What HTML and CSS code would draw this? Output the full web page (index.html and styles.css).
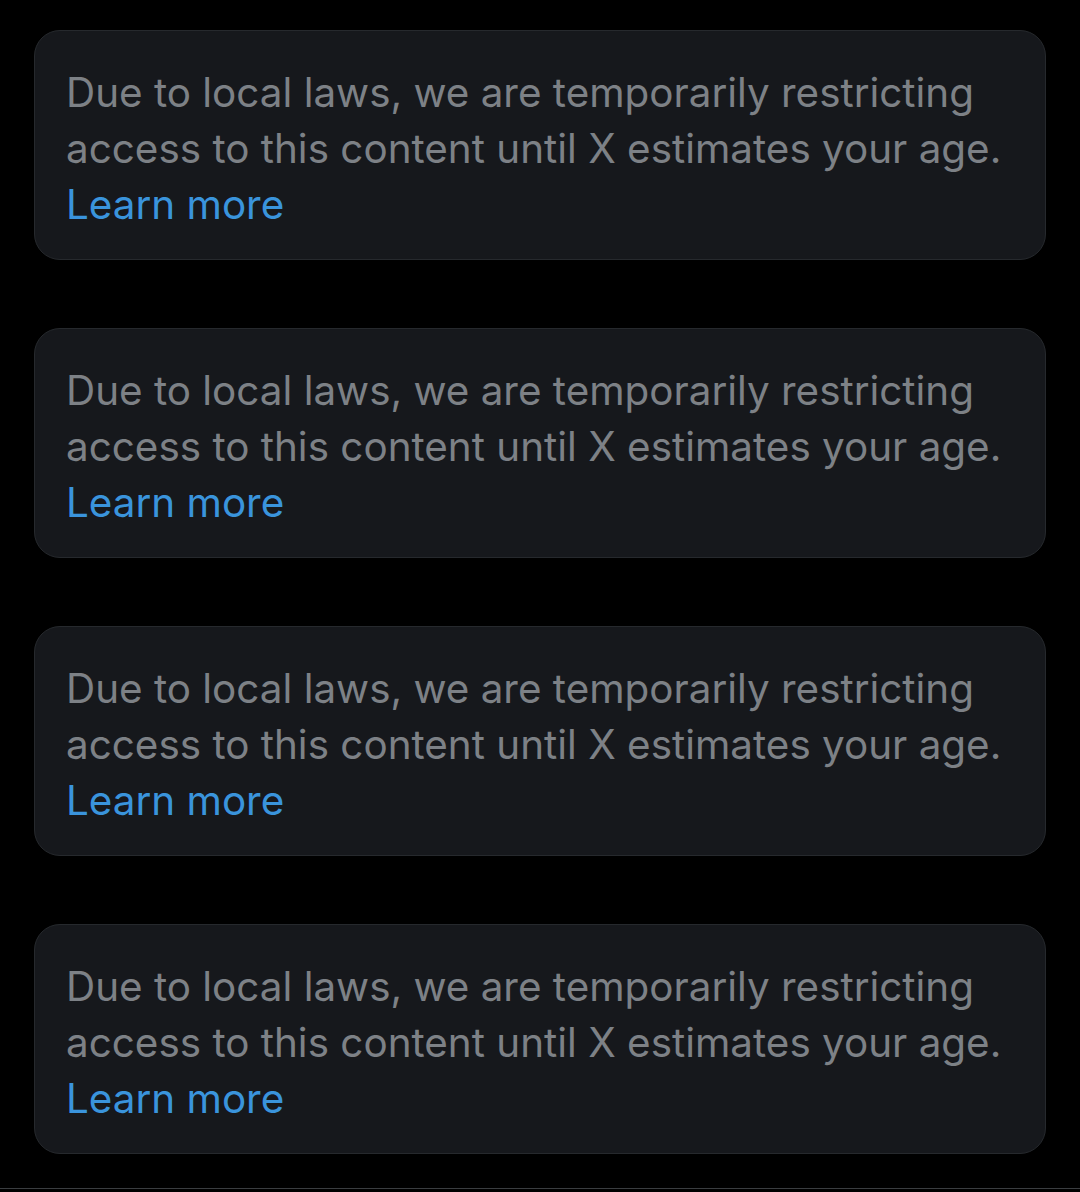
FILE: index.html
```html
<!DOCTYPE html>
<html lang="en">
<head>
<meta charset="utf-8">
<link rel="stylesheet" href="styles.css">
<title>Restricted content</title>
</head>
<body>
<main class="feed">
  <div class="notice">
    <p class="notice-text"><span class="line">Due to local laws, we are temporarily restricting</span> <span class="line">access to this content until X estimates your age.</span> <a class="notice-link" href="#">Learn more</a></p>
  </div>
  <div class="notice">
    <p class="notice-text"><span class="line">Due to local laws, we are temporarily restricting</span> <span class="line">access to this content until X estimates your age.</span> <a class="notice-link" href="#">Learn more</a></p>
  </div>
  <div class="notice">
    <p class="notice-text"><span class="line">Due to local laws, we are temporarily restricting</span> <span class="line">access to this content until X estimates your age.</span> <a class="notice-link" href="#">Learn more</a></p>
  </div>
  <div class="notice">
    <p class="notice-text"><span class="line">Due to local laws, we are temporarily restricting</span> <span class="line">access to this content until X estimates your age.</span> <a class="notice-link" href="#">Learn more</a></p>
  </div>
</main>
<div class="divider"></div>
</body>
</html>
```

FILE: styles.css
```css
html, body {
  margin: 0;
  padding: 0;
  background: #000;
}
body {
  width: 1080px;
  height: 1192px;
  overflow: hidden;
  font-family: Inter, "Noto Sans", sans-serif;
}
.feed {
  display: flex;
  flex-direction: column;
  gap: 68px;
  padding: 30px 34px 0 34px;
}
.notice {
  box-sizing: border-box;
  height: 230px;
  background: #16181c;
  border: 1px solid #26292d;
  border-radius: 26px;
  padding: 34px 31px 0 31px;
}
.notice-text {
  margin: 0;
  font-size: 40.4px;
  line-height: 56px;
  color: #7d8186;
}
.line {
  display: block;
  white-space: nowrap;
}
.notice-link {
  color: #3a94dc;
  text-decoration: none;
}
.divider {
  margin-top: 34px;
  height: 1px;
  background: #3a3d40;
}
```
